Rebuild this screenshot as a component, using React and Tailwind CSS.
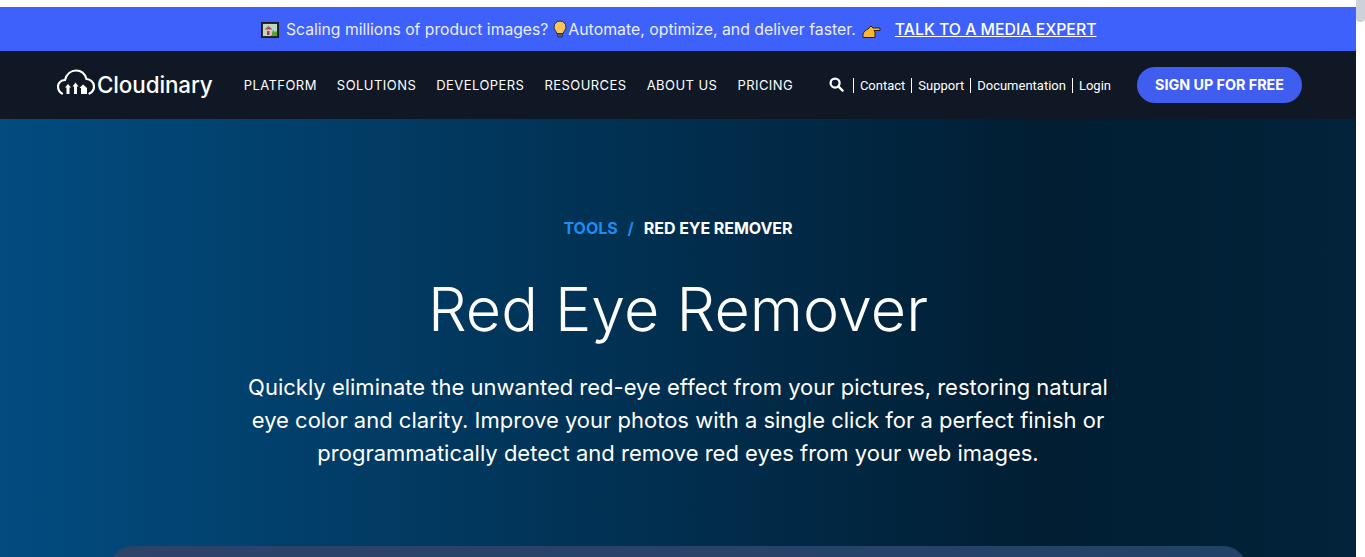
import React from 'react';

const navItems = ['PLATFORM', 'SOLUTIONS', 'DEVELOPERS', 'RESOURCES', 'ABOUT US', 'PRICING'];
const utilLinks = ['Contact', 'Support', 'Documentation', 'Login'];

const PictureEmoji = () => (
  <svg width="18" height="16" viewBox="0 0 18 16" className="shrink-0">
    <rect x="0.5" y="0.5" width="17" height="15" fill="#2e2a1c" stroke="#1c1c1c" />
    <rect x="2" y="2" width="14" height="12" fill="#b9d9c4" />
    <path d="M10 14l2-6 2 2 2-1v5z" fill="#58a23c" />
    <rect x="4" y="7" width="7" height="6" fill="#d8c8c0" />
    <path d="M3.500 7.500L7.500 4l4 3.500z" fill="#a8505a" />
    <rect x="6" y="9" width="2.500" height="4" fill="#8a4650" />
  </svg>
);

const BulbEmoji = () => (
  <svg width="14" height="18" viewBox="0 0 14 18" className="shrink-0">
    <path d="M7 1a6 6 0 0 0-6 6c0 2.500 2 4 3 6.500h6c1-2.500 3-4 3-6.500a6 6 0 0 0-6-6z" fill="#fbc55c" stroke="#1c2a50" strokeWidth="1" />
    <rect x="4.500" y="13.500" width="5" height="3.500" rx="1" fill="#53617e" stroke="#1c2a50" strokeWidth="0.8" />
  </svg>
);

const PointEmoji = () => (
  <svg width="19" height="14" viewBox="0 0 19 14" className="shrink-0">
    <path d="M1 9c1-3 3-4 5-5l3-3 2 2h7v2.500h-6l1 1.500v5.500H4L1 12.500z" fill="#fbb62f" stroke="#2c2208" strokeWidth="1" strokeLinejoin="round" />
  </svg>
);

const Logo = () => (
  <div className="flex items-center">
    <svg width="38" height="27" viewBox="0 0 38 27" fill="none" stroke="white" strokeWidth="2.200" strokeLinecap="round" className="-mt-[5px]">
      <path d="M5 24.500C2.500 23 1 20.500 1 17.500 1 14 4 11 8 11 9.500 5 14 1.500 19 1.500c5 0 9 3.500 10.500 8.500 4 0 7.500 3.500 7.500 7.500 0 3-1.500 5.500-4.500 7" />
      <g fill="white" stroke="none">
        <path d="M11 15l3 3.500h-1.500v6.500h-3v-6.500H8z" />
        <path d="M18.500 13.500l3 4h-1.500v7.500h-3v-7.500H15.500z" />
        <path d="M26 15.500l4 3.500v6h-6v-6h-1.500z" />
      </g>
    </svg>
    <span className="ml-[2px] font-['Inter',sans-serif] text-[22.400px] font-medium leading-none tracking-[-0.1px] text-white">Cloudinary</span>
  </div>
);

export default function App() {
  return (
    <div className="flex h-[557px] overflow-hidden bg-white font-['Inter',sans-serif]">
      <div className="flex w-[1356px] shrink-0 flex-col pt-[7px]">
        {/* promo bar */}
        <div className="flex h-[44px] shrink-0 items-center bg-[#3f61fb] pl-[261px] pt-[2px] text-white">
          <PictureEmoji />
          <span className="ml-[7px] whitespace-nowrap text-[15.700px] text-[#e8edff]">Scaling millions of product images?</span>
          <span className="ml-[5px] -mt-[2px]"><BulbEmoji /></span>
          <span className="ml-[1px] whitespace-nowrap text-[15.850px] text-[#e8edff]">Automate, optimize, and deliver faster.</span>
          <span className="ml-[6px] mt-[3px]"><PointEmoji /></span>
          <a className="ml-[14px] whitespace-nowrap text-[15.800px] font-medium underline">TALK TO A MEDIA EXPERT</a>
        </div>

        {/* main nav */}
        <header className="flex h-[68px] shrink-0 items-center bg-[#101825] pl-[57px] pr-[54px] text-white">
          <Logo />
          <nav className="ml-[31px] mt-[1px] flex gap-[20px] whitespace-nowrap text-[13px] tracking-[0.45px]">
            {navItems.map((item) => (
              <a key={item}>{item}</a>
            ))}
          </nav>
          <div className="ml-auto flex items-center">
            <svg width="15" height="15" viewBox="0 0 16 16" fill="none" stroke="white" strokeWidth="2.400" className="-mt-[2px]">
              <circle cx="6.500" cy="6.500" r="4.800" />
              <path d="M10 10l4.500 4.500" strokeLinecap="round" />
            </svg>
            <div className="ml-[9px] flex items-center whitespace-nowrap font-['Roboto',sans-serif] text-[13px]">
              {utilLinks.map((link, i) => (
                <a key={link} className={`border-l border-white pl-[6px] leading-[15px] ${i < 3 ? 'pr-[6px]' : ''}`}>
                  {link}
                </a>
              ))}
            </div>
            <button className="ml-[26px] h-[36px] w-[165px] rounded-full bg-[#3f5ef0] text-[14.300px] font-bold">SIGN UP FOR FREE</button>
          </div>
        </header>

        {/* hero */}
        <main className="flex min-h-0 flex-1 flex-col items-center bg-[linear-gradient(90deg,#024c80_0%,#011e33_77%,#02233a_100%)] pt-[99px] text-white">
          <div className="flex text-[16px] font-bold leading-[20px] tracking-[-0.05px]">
            <span className="text-[#1e8cf0]">TOOLS</span>
            <span className="mx-[10px] text-[#1e8cf0]">/</span>
            <span>RED EYE REMOVER</span>
          </div>
          <h1 className="mt-[35px] text-[61px] font-light leading-[72px]">Red Eye Remover</h1>
          <p className="mt-[26px] w-[880px] text-center text-[22px] leading-[33px]">
            Quickly eliminate the unwanted red-eye effect from your pictures, restoring natural eye color and clarity. Improve your photos with a single click for a perfect finish or programmatically detect and remove red eyes from your web images.
          </p>
          <div className="mt-[76px] h-[60px] w-[1138px] shrink-0 rounded-t-[24px] bg-[linear-gradient(90deg,#2f4268,#234268)]" />
        </main>
      </div>

      {/* scrollbar gutter */}
      <div className="flex-1 bg-white">
        <div className="h-[22px] rounded-b-[4px] bg-[#cdd2d9]" />
      </div>
    </div>
  );
}
